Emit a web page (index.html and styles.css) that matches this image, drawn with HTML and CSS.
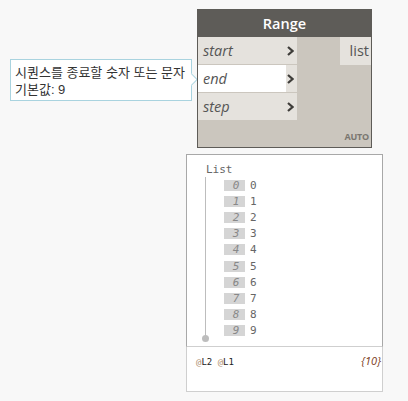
FILE: index.html
```html
<!DOCTYPE html>
<html>
<head>
<meta charset="utf-8">
<link rel="stylesheet" href="styles.css">
</head>
<body>
<div class="canvas">
  <div class="tooltip">
    <div class="tip-line">시퀀스를 종료할 숫자 또는 문자</div>
    <div class="tip-line">기본값: 9</div>
    <span class="tip-arrow"></span>
  </div>

  <div class="node">
    <div class="node-header">Range</div>
    <div class="node-body">
      <div class="inputs">
        <div class="port"><span class="port-name">start</span><span class="chev"><svg width="7" height="10" viewBox="0 0 7 10"><path d="M1 1 L5.5 5 L1 9" fill="none" stroke="#3f3d3a" stroke-width="2.2"/></svg></span></div>
        <div class="port active"><span class="port-name">end</span><span class="chev"><svg width="7" height="10" viewBox="0 0 7 10"><path d="M1 1 L5.5 5 L1 9" fill="none" stroke="#3f3d3a" stroke-width="2.2"/></svg></span></div>
        <div class="port"><span class="port-name">step</span><span class="chev"><svg width="7" height="10" viewBox="0 0 7 10"><path d="M1 1 L5.5 5 L1 9" fill="none" stroke="#3f3d3a" stroke-width="2.2"/></svg></span></div>
      </div>
      <div class="outputs">
        <div class="out-port">list</div>
      </div>
      <div class="auto">AUTO</div>
    </div>
  </div>

  <div class="watch">
    <div class="watch-main">
      <div class="list-label">List</div>
      <div class="tree">
        <div class="item"><span class="idx">0</span><span class="val">0</span></div>
        <div class="item"><span class="idx">1</span><span class="val">1</span></div>
        <div class="item"><span class="idx">2</span><span class="val">2</span></div>
        <div class="item"><span class="idx">3</span><span class="val">3</span></div>
        <div class="item"><span class="idx">4</span><span class="val">4</span></div>
        <div class="item"><span class="idx">5</span><span class="val">5</span></div>
        <div class="item"><span class="idx">6</span><span class="val">6</span></div>
        <div class="item"><span class="idx">7</span><span class="val">7</span></div>
        <div class="item"><span class="idx">8</span><span class="val">8</span></div>
        <div class="item"><span class="idx">9</span><span class="val">9</span></div>
        <span class="tree-dot"></span>
      </div>
    </div>
    <div class="watch-footer">
      <span class="levels"><span class="at">@</span>L2 <span class="at">@</span>L1</span>
      <span class="count">{10}</span>
    </div>
  </div>
</div>
</body>
</html>
```

FILE: styles.css
```css
html, body {
  margin: 0;
  padding: 0;
  background: #f8f8f8;
}
.canvas {
  position: relative;
  width: 408px;
  height: 401px;
  overflow: hidden;
}

/* tooltip */
.tooltip {
  position: absolute;
  left: 10px;
  top: 59px;
  width: 182px;
  height: 42px;
  box-sizing: border-box;
  padding: 4px 0 0 4px;
  background: #fff;
  border: 1px solid #a9d3df;
  font-family: "Liberation Sans", "Noto Sans CJK KR", sans-serif;
  font-size: 13px;
  color: #333;
  white-space: nowrap;
}
.tip-line {
  height: 17px;
  line-height: 17px;
}
.tip-arrow {
  position: absolute;
  right: -5px;
  top: 15px;
  width: 8px;
  height: 8px;
  background: #fff;
  border-top: 1px solid #a9d3df;
  border-right: 1px solid #a9d3df;
  transform: rotate(45deg);
}

/* node */
.node {
  position: absolute;
  left: 197px;
  top: 9px;
  width: 175px;
  height: 139px;
  box-sizing: border-box;
  border: 1px solid #5e5c58;
  background: #cbc6be;
  display: flex;
  flex-direction: column;
}
.node-header {
  height: 27px;
  background: #5e5c58;
  color: #fff;
  font-family: "Open Sans", sans-serif;
  font-weight: 600;
  font-size: 14.5px;
  line-height: 27px;
  text-align: center;
}
.node-body {
  position: relative;
  flex: 1;
  display: flex;
  justify-content: space-between;
}
.inputs {
  width: 99px;
  display: flex;
  flex-direction: column;
  gap: 1px;
}
.port {
  height: 27px;
  display: flex;
  background: #e5e2dd;
  font-family: "Open Sans", sans-serif;
  font-style: italic;
  font-size: 14.5px;
  color: #555;
}
.port-name {
  flex: 1;
  padding-left: 5px;
  line-height: 27px;
}
.port.active .port-name {
  background: #fff;
}
.chev {
  width: 10px;
  display: flex;
  align-items: center;
  padding-left: 1px;
}
.outputs {
  width: 31px;
}
.out-port {
  height: 28px;
  background: #e5e2dd;
  font-family: "Open Sans", sans-serif;
  font-size: 14.5px;
  color: #555;
  line-height: 28px;
  text-align: right;
  padding-right: 2px;
}
.auto {
  position: absolute;
  right: 2px;
  bottom: 4px;
  font-family: "Open Sans", sans-serif;
  font-weight: 700;
  font-size: 9px;
  color: #7a7670;
  letter-spacing: -0.2px;
}

/* watch */
.watch {
  position: absolute;
  left: 186px;
  top: 154px;
  width: 197px;
  height: 238px;
  box-sizing: border-box;
  background: #fff;
  border: 1px solid #cfcfcf;
  display: flex;
  flex-direction: column;
}
.watch-main {
  box-sizing: border-box;
  height: 193px;
  border: 1px solid #a8a8a8;
  border-bottom-color: #cfcfcf;
  margin: -1px -1px 0 -1px;
  padding: 8px 0 0 18px;
  font-family: "DejaVu Sans Mono", monospace;
  font-size: 11px;
  color: #666;
}
.list-label {
  line-height: 14px;
  padding-left: 1px;
}
.tree {
  position: relative;
  border-left: 1px solid #bdbdbd;
  padding: 0 0 0 18px;
  height: 162px;
  box-sizing: border-box;
}
.tree-dot {
  position: absolute;
  left: -4px;
  bottom: -3px;
  width: 7px;
  height: 7px;
  border-radius: 50%;
  background: #bdbdbd;
}
.item {
  height: 16.2px;
  display: flex;
  align-items: center;
}
.idx {
  width: 21px;
  height: 11px;
  background: #d5d5d5;
  color: #888;
  font-style: italic;
  text-align: center;
  padding-left: 3px;
  box-sizing: border-box;
  line-height: 11px;
}
.val {
  margin-left: 5px;
  color: #666;
}
.watch-footer {
  display: flex;
  justify-content: space-between;
  padding: 7px 1px 0 9px;
  font-family: "DejaVu Sans Mono", monospace;
}
.levels {
  font-size: 9px;
  color: #222;
  line-height: 16px;
}
.at {
  color: #b09070;
}
.count {
  font-family: "Open Sans", sans-serif;
  font-style: italic;
  font-size: 11px;
  color: #7a3a20;
  line-height: 14px;
}
```
